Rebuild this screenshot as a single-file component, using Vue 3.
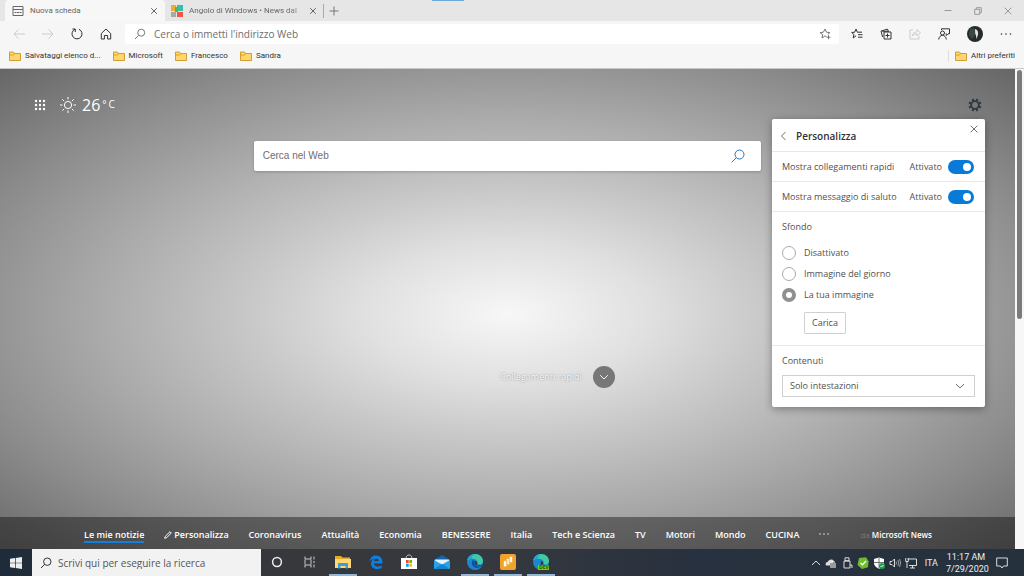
<script setup>
import { ref } from 'vue'

const favorites = ['Salvataggi elenco d...', 'Microsoft', 'Francesco', 'Sandra']
const topics = ['Coronavirus', 'Attualità', 'Economia', 'BENESSERE', 'Italia', 'Tech e Scienza', 'TV', 'Motori', 'Mondo', 'CUCINA']
const quickLinks = ref(true)
const greeting = ref(true)
const background = ref('custom')
const backgrounds = [
  { id: 'off', label: 'Disattivato' },
  { id: 'daily', label: 'Immagine del giorno' },
  { id: 'custom', label: 'La tua immagine' },
]
</script>

<template>
  <div class="desktop">
    <header class="tabs">
      <div class="tab active">
        <svg class="i12" viewBox="0 0 12 12"><path d="M1 1.500h10v9H1zM1 4.500h10M2.500 7.500h2M5 7.500h2M7.500 7.500h2" /></svg>
        <span class="tab-title">Nuova scheda</span>
        <button class="bare" aria-label="Chiudi scheda"><svg class="i8" viewBox="0 0 8 8"><path d="M1.200 1.200l5.600 5.600M6.800 1.200L1.200 6.800" /></svg></button>
      </div>
      <div class="tab second">
        <svg class="i12 solid" viewBox="0 0 12 12"><path fill="#f0ad2d" d="M0 0h5v6H0z" /><path fill="#35bfa8" d="M6 0h6v6H6z" /><path fill="#a8a8a8" d="M0 7h5v5H0z" /><path fill="#f25745" d="M6 7h6v5H6z" /><path fill="#5db447" d="M4 2h3v5H4z" /></svg>
        <span class="tab-title faded">Angolo di Windows • News dal</span>
        <button class="bare" aria-label="Chiudi scheda"><svg class="i8" viewBox="0 0 8 8"><path d="M1.200 1.200l5.600 5.600M6.800 1.200L1.200 6.800" /></svg></button>
      </div>
      <button class="bare new-tab" aria-label="Nuova scheda"><svg class="i10" viewBox="0 0 10 10"><path d="M5 .5v9M.5 5h9" /></svg></button>
      <i class="accent"></i>
      <div class="window-controls">
        <button class="bare" aria-label="Riduci"><svg class="i8" viewBox="0 0 8 8"><path d="M.5 3.500h7" /></svg></button>
        <button class="bare" aria-label="Ripristina"><svg class="i8" viewBox="0 0 8 8"><path d="M.7 2.300h5v5h-5zM2.300 2V.7h5v5H6" /></svg></button>
        <button class="bare" aria-label="Chiudi"><svg class="i8" viewBox="0 0 8 8"><path d="M.7.7l6.600 6.600M7.300.7L.7 7.300" /></svg></button>
      </div>
    </header>

    <nav class="toolbar">
      <div class="nav-buttons">
        <button class="bare off" aria-label="Indietro"><svg class="i14" viewBox="0 0 14 14"><path d="M13 7H2M6.500 2.500L2 7l4.500 4.500" /></svg></button>
        <button class="bare off" aria-label="Avanti"><svg class="i14" viewBox="0 0 14 14"><path d="M1 7h11M7.500 2.500L12 7l-4.500 4.500" /></svg></button>
        <button class="bare" aria-label="Aggiorna"><svg class="i14 dark" viewBox="0 0 14 14"><path d="M9 2.300A5 5 0 1 1 5 2.300M5.300 5V2H2.400" /></svg></button>
        <button class="bare" aria-label="Pagina iniziale"><svg class="i14 dark" viewBox="0 0 14 14"><path d="M2.300 6.500L7 2l4.700 4.500V12H8.600V8.500H5.400V12H2.300z" /></svg></button>
      </div>
      <label class="address">
        <svg class="i12" viewBox="0 0 12 12"><circle cx="7.200" cy="4.700" r="3.500" /><path d="M4.700 7.300L1 11" /></svg>
        <input type="text" aria-label="Indirizzo" placeholder="Cerca o immetti l'indirizzo Web" />
        <button class="bare" aria-label="Aggiungi ai preferiti"><svg class="i12" viewBox="0 0 12 12"><path d="M7.500 8.600L6 7.900 3 10l.7-3.400L1 4.600l3.400-.4L6 1l1.500 3.200 3.400.4-2 1.900M7.500 9.200h4M9.500 7.200v4" /></svg></button>
      </label>
      <div class="tools">
        <button class="bare" aria-label="Preferiti"><svg class="i12 dark" viewBox="0 0 12 12"><path d="M5 7.800L2.200 10l.7-3.500L.7 4.500l3-.3L5 1l1.300 3.200H11M7 6.700h4.500M7 9.200h4.500" /></svg></button>
        <button class="bare" aria-label="Raccolte"><svg class="i12 dark" viewBox="0 0 12 12"><path d="M4 4h7v7H4zM7.500 5.500v4M5.500 7.500h4M2.600 9L1 3l6.600-1.800.6 2M2.300 3.300H9" /></svg></button>
        <button class="bare off" aria-label="Condividi"><svg class="i12" viewBox="0 0 12 12"><path d="M4 2H1v9h9V8M3.500 8c.2-3 2-4 4.500-4V1.500L11.500 5 8 8V6C6 6 4.500 6.500 3.500 8z" /></svg></button>
        <button class="bare" aria-label="Feedback"><svg class="i12 dark" viewBox="0 0 12 12"><circle cx="4.500" cy="5" r="2" /><path d="M.7 11.500c.4-5.500 7.200-5.500 7.600 0M3.500 2V.8h8v5H10L8.300 7.500V5.800H7.700" /></svg></button>
        <button class="bare" aria-label="Profilo"><svg class="i16 solid" viewBox="0 0 16 16"><circle cx="8" cy="8" r="8" fill="#242b30" /><path fill="#58614f" d="M3 3l4-1 2 6-4 5-3-4z" opacity=".5" /><path fill="#e9e4d9" d="M8 3c4 1 4 6 1 10 .6-3-.2-4-.8-5.500z" /></svg></button>
        <button class="bare" aria-label="Altro"><svg class="i12 solid dark" viewBox="0 0 12 12"><circle cx="1.500" cy="6" r=".8" /><circle cx="6" cy="6" r=".8" /><circle cx="10.500" cy="6" r=".8" /></svg></button>
      </div>
    </nav>

    <nav class="favorites">
      <a v-for="name in favorites" :key="name" href="#">
        <svg class="i12 solid" viewBox="0 0 12 12"><path fill="#ffd66b" stroke="#c98b16" stroke-width=".8" d="M.5 2h4l1.200 1.500h5.800V10.500H.5z" /><path fill="none" stroke="#c98b16" stroke-width=".7" d="M.5 5h4l1.200-1.500" /></svg>{{ name }}
      </a>
      <a class="others" href="#">
        <svg class="i12 solid" viewBox="0 0 12 12"><path fill="#ffd66b" stroke="#c98b16" stroke-width=".8" d="M.5 2h4l1.200 1.500h5.800V10.500H.5z" /><path fill="none" stroke="#c98b16" stroke-width=".7" d="M.5 5h4l1.200-1.500" /></svg>Altri preferiti
      </a>
    </nav>

    <div class="viewport">
      <main class="page">
        <div class="top">
          <button class="bare" aria-label="App"><svg class="i12 solid" viewBox="0 0 12 12"><template v-for="y in 3" :key="y"><circle v-for="x in 3" :key="x" :cx="x * 4 - 2" :cy="y * 4 - 2" r="1.200" /></template></svg></button>
          <svg class="i16 sun" viewBox="0 0 16 16"><circle cx="8" cy="8" r="3.600" /><path d="M8 0v2.500M8 13.500V16M0 8h2.500M13.500 8H16M2.300 2.300l1.800 1.800M11.900 11.900l1.800 1.800M2.300 13.700l1.800-1.800M11.900 4.100l1.800-1.800" /></svg>
          <span class="temp">26<sup><span>°</span><span>C</span></sup></span>
          <button class="bare gear" aria-label="Impostazioni pagina"><svg class="i14" viewBox="0 0 14 14"><circle cx="7" cy="7" r="3.800" stroke-width="1.800" /><path stroke-width="2.200" d="M8.500 3.300l.9-2.300M10.700 5.500l2.300-.9M10.700 8.500l2.300.9M8.500 10.700l.9 2.300M5.500 10.700L4.600 13M3.300 8.500L1 9.400M3.300 5.500L1 4.600M5.500 3.300L4.600 1" /></svg></button>
        </div>
        <form class="web-search" @submit.prevent>
          <input type="text" aria-label="Cerca nel Web" placeholder="Cerca nel Web" />
          <button class="bare" aria-label="Cerca"><svg class="i14" viewBox="0 0 14 14"><circle cx="8.500" cy="5.500" r="4.500" /><path d="M5.300 8.700L.7 13.300" /></svg></button>
        </form>
        <div class="quick">
          <span>Collegamenti rapidi</span>
          <button class="bare" aria-label="Mostra collegamenti"><svg class="i10" viewBox="0 0 10 10"><path d="M1.200 3.200L5 7l3.800-3.800" /></svg></button>
        </div>
        <nav class="news">
          <a href="#" class="current">Le mie notizie</a>
          <a href="#" class="edit"><svg class="i8" viewBox="0 0 8 8"><path d="M.7 7.300l.6-2L6 .7 7.300 2 2.700 6.700z" /></svg>Personalizza</a>
          <a v-for="topic in topics" :key="topic" href="#">{{ topic }}</a>
          <button class="bare" aria-label="Altre notizie"><svg class="i10 solid" viewBox="0 0 10 10"><circle cx="1" cy="4" r=".7" /><circle cx="5" cy="4" r=".7" /><circle cx="9" cy="4" r=".7" /></svg></button>
          <span class="source"><small>da</small> Microsoft News</span>
        </nav>

        <section class="panel">
          <header>
            <button class="bare" aria-label="Indietro"><svg class="i10" viewBox="0 0 10 10"><path d="M6.500 1l-4 4 4 4" /></svg></button>
            <h2>Personalizza</h2>
            <button class="bare close" aria-label="Chiudi"><svg class="i8" viewBox="0 0 8 8"><path d="M.7.7l6.600 6.600M7.300.7L.7 7.300" /></svg></button>
          </header>
          <label class="switch-row">Mostra collegamenti rapidi<span>Attivato</span><input v-model="quickLinks" type="checkbox" role="switch" /></label>
          <label class="switch-row">Mostra messaggio di saluto<span>Attivato</span><input v-model="greeting" type="checkbox" role="switch" /></label>
          <fieldset>
            <legend>Sfondo</legend>
            <label v-for="item in backgrounds" :key="item.id"><input v-model="background" type="radio" name="background" :value="item.id" />{{ item.label }}</label>
            <button class="upload">Carica</button>
          </fieldset>
          <div class="contents">
            <label for="content-mode">Contenuti</label>
            <div class="select-box">
              <select id="content-mode"><option>Solo intestazioni</option></select>
              <svg class="i10" viewBox="0 0 10 10"><path d="M1 3l4 4 4-4" /></svg>
            </div>
          </div>
        </section>
      </main>
      <div class="scrollbar"><i></i></div>
    </div>

    <footer class="taskbar">
      <button class="bare start" aria-label="Start"><svg class="i12 solid" viewBox="0 0 12 12"><path d="M0 1.700l5-.7v4.700H0zM5.700.9L12 0v5.700H5.700zM0 6.300h5V11l-5-.7zM5.700 6.300H12V12l-6.300-.9z" /></svg></button>
      <label class="task-search">
        <svg class="i12" viewBox="0 0 12 12"><circle cx="7.300" cy="4.700" r="3.700" /><path d="M4.700 7.300L1 11" /></svg>
        <input type="text" aria-label="Ricerca" placeholder="Scrivi qui per eseguire la ricerca" />
      </label>
      <div class="apps">
        <button class="bare" aria-label="Cortana"><svg class="i12" viewBox="0 0 12 12"><circle cx="6" cy="6" r="4.400" stroke-width="1.500" /></svg></button>
        <button class="bare" aria-label="Visualizzazione attività"><svg class="i12 thin" viewBox="0 0 12 12"><path d="M1 .5V3h6V.5M1 11.500V9h6v2.500M1 3.500v5M7 3.500v5M10 .5v3M10 5v2M10 8.500v3" /></svg></button>
        <button class="bare open" aria-label="Esplora file"><svg class="i16 solid" viewBox="0 0 16 16"><path fill="#e8a92b" d="M0 2h6l1.500 1.500H15V14H0z" /><path fill="#ffd875" d="M0 5h16v9H0z" /><path fill="#3f9bdc" d="M3 9h10v5.500h-2.500V12h-5v2.500H3z" /></svg></button>
        <button class="bare" aria-label="Edge classico"><svg class="i14 solid" viewBox="0 0 14 14"><path fill="#0a7fde" d="M.5 6.300C1.200 2.400 3.700.5 7.200.5c4 0 6.300 2.900 6.300 6.900v1.100H5c.2 3.400 4.700 3.700 7.700 1.900v2.500C8.700 15.100 2 14 2 8.700c0-2.500 1.600-4.200 3.500-5C3 4 1.500 5.200.5 6.300zM5 6h4.700C9.700 3 5.200 3.200 5 6z" /></svg></button>
        <button class="bare" aria-label="Store"><svg class="i16 solid" viewBox="0 0 16 16"><path fill="none" stroke="#bbb" d="M5 4.500C5-.3 11-.3 11 4.500" /><path fill="#fff" d="M0 4h16v11H0z" /><path fill="#ef5028" d="M5 6h2.700v3H5z" /><path fill="#7db700" d="M8.300 6H11v3H8.300z" /><path fill="#00a3ee" d="M5 9.700h2.700v3H5z" /><path fill="#fdb813" d="M8.300 9.700H11v3H8.300z" /></svg></button>
        <button class="bare" aria-label="Posta"><svg class="i16 solid" viewBox="0 0 16 16"><path fill="#1265ad" d="M0 6l8-5 8 5v9H0z" /><path fill="#e4f4ff" d="M1 5.500h14v2L8 12 1 7.500z" /><path fill="#27a3e8" d="M0 6l8 4.500L16 6v9H0z" /><path fill="#1685cf" d="M0 15l8-5 8 5z" /></svg></button>
        <button class="bare open" aria-label="Edge"><svg class="i16 solid" viewBox="0 0 16 16"><circle cx="8" cy="8" r="8" fill="#1c86d2" /><path fill="#41c9a3" d="M.3 6.500C1.200 2.500 4.300 0 8 0c5 0 8 3.400 8 7.200 0 3-3.500 4-6 3 1.300-2 .2-4.600-2.700-5.200C4.200 4.300 1.500 5 .3 6.500z" /><path fill="#23a4d8" d="M.3 6.500C1.200 2.500 4.300 0 8 0 6 1 4.500 3 4.600 4.700 2.800 4.800 1.200 5.400.3 6.500z" /><path fill="#0c519f" d="M5.800 6.200C3 9.500 6.500 15 11.500 13.800c1.300-.3 2.300-1 3-1.800-3.300 1.500-9-.2-6.500-5.200-.6-.5-1.500-.7-2.200-.6z" /><path fill="#333b42" d="M8 7c-1.300 3.800 2 5.500 6.500 4.800l1-1.300c-1.900.8-4 .9-5.500-.3.900-1.400.2-3-2-3.200z" /></svg></button>
        <button class="bare open" aria-label="Presentazione"><svg class="i16 solid" viewBox="0 0 16 16"><rect width="16" height="16" rx="2" fill="#efa22d" /><path fill="#fff" stroke="#efa22d" stroke-width=".6" d="M3.500 7l3.500-.7v6l-3.500.7zM6.300 5l3.500-.7v6l-3.500.7zM9 3l3.500-.7v6L9 9z" /></svg></button>
        <button class="bare open" aria-label="Edge Dev"><svg class="i16 solid" viewBox="0 0 16 16"><circle cx="8" cy="8" r="8" fill="#1c86d2" /><path fill="#41c9a3" d="M.3 6.500C1.200 2.500 4.300 0 8 0c5 0 8 3.400 8 7.200 0 3-3.500 4-6 3 1.300-2 .2-4.600-2.700-5.200C4.200 4.300 1.500 5 .3 6.500z" /><path fill="#23a4d8" d="M.3 6.500C1.200 2.500 4.300 0 8 0 6 1 4.500 3 4.600 4.700 2.800 4.800 1.200 5.400.3 6.500z" /><path fill="#333b42" d="M8 7c-1.300 3.800 2 5.500 6.500 4.800l1-1.300c-1.900.8-4 .9-5.500-.3.900-1.400.2-3-2-3.200z" /><path fill="#73cf12" d="M5 11h11v5H5z" /><text x="6" y="15.400" font-size="5" font-weight="700" fill="#28520b">DEV</text></svg></button>
      </div>
      <div class="tray">
        <svg class="i10" viewBox="0 0 10 10"><path d="M1 7l4-4 4 4" /></svg>
        <svg class="i12 solid" viewBox="0 0 12 12"><path fill="#ddd" d="M1 8.500C0 6 1.500 5 2.700 5 3.500 2 8 1.300 9.200 4.500L6 8.500z" /><path fill="#999" d="M5 6h6v5H5z" /><path fill="none" stroke="#eee" stroke-width=".8" d="M6.300 6V4.500h3V6" /></svg>
        <svg class="i12" viewBox="0 0 12 12"><path d="M4 .8h4v3H4zM3 4h6v7H3zM9 8h2v3" /></svg>
        <svg class="i12 solid" viewBox="0 0 12 12"><path fill="#70bd2b" d="M2 1l7-.7 2.500 4-.5 6L5 12 .5 8z" /><path fill="none" stroke="#fff" stroke-width="1.300" d="M3.500 6l2 1.800L9 4" /></svg>
        <svg class="i12 solid" viewBox="0 0 12 12"><path fill="#fff" d="M1 2l5-1.500L11 2v4c0 3-3 5-5 5.700C3.500 10.500 1 9 1 6z" /><path fill="none" stroke="#46505b" stroke-width=".8" d="M6 1v10M1 5.500h10" /><circle cx="9" cy="9" r="3" fill="#1ba34d" /><path fill="none" stroke="#fff" d="M7.500 9l1 1 2-2" /></svg>
        <svg class="i12" viewBox="0 0 12 12"><path d="M1 4.500h2L5.500 2v8L3 7.500H1z" /><path opacity=".65" d="M7 4.500q1 1.500 0 3M8.800 3q2 3 0 6M10.600 2q2 4 0 8" /></svg>
        <svg class="i12" viewBox="0 0 12 12"><path d="M2.500 2h9v6.500H4M7.500 8.500V11M5 11h5M.7 1v3.500h2.600V1M2 4.500V11" /></svg>
        <span class="lang">ITA</span>
        <time>11:17 AM<br />7/29/2020</time>
        <svg class="i12 note" viewBox="0 0 12 12"><path d="M.7 1h10.600v8H7.500L6 11 4.500 9H.7z" /></svg>
      </div>
    </footer>
  </div>
</template>

<style>
body { margin: 0; }
</style>

<style scoped>
.desktop {
  display: flex;
  flex-direction: column;
  min-height: 100vh;
  overflow: hidden;
  background: #f6f6f6;
  color: #444;
  font-family: "Open Sans", "Noto Sans", sans-serif;
  font-size: 9px;
  line-height: 12px;
}
* { box-sizing: border-box; }
a { color: inherit; text-decoration: none; }
button, input, select { font: inherit; color: inherit; }
input { min-width: 0; border: 0; outline: 0; background: none; padding: 0; }
input::placeholder { color: #6e6e6e; opacity: 1; }
.bare { display: flex; align-items: center; justify-content: center; padding: 0; border: 0; background: none; }
svg { display: block; flex: none; overflow: visible; fill: none; stroke: currentColor; }
svg.solid { fill: currentColor; stroke: none; }
.i8 { width: 8px; height: 8px; }
.i10 { width: 10px; height: 10px; }
.i12 { width: 12px; height: 12px; }
.i14 { width: 14px; height: 14px; }
.i16 { width: 16px; height: 16px; }
.dark { color: #333; }
.off { color: #ccc; }
.tabs, .favorites { font-family: Roboto, "Noto Sans", sans-serif; font-size: 8px; }
.lang, time { font-family: Roboto, "Noto Sans", sans-serif; }

.tabs { display: flex; position: relative; height: 21px; background: #e6e6e6; color: #666; }
.tab { display: flex; align-items: center; gap: 6px; width: 160px; padding: 0 7px; }
.active { margin-left: 5px; background: #f7f7f7; border-radius: 4px 4px 0 0; }
.second { width: 158px; padding: 0 6px; }
.tab-title { flex: 1; white-space: nowrap; }
.faded { mask-image: linear-gradient(90deg, #000 85%, #0008); }
.new-tab { align-self: center; height: 14px; padding-left: 5px; border-left: 1px solid #aaa; color: #777; }
.accent { position: absolute; left: calc(50% - 80px); top: 0; width: 32px; height: 1px; background: #6aa8d6; }
.window-controls { display: flex; gap: 22px; margin: 0 12px 0 auto; color: #999; }

.toolbar { display: flex; align-items: center; height: 26px; }
.nav-buttons { display: flex; gap: 15px; margin: 0 12px; }
.address { display: flex; flex: 1; align-items: center; gap: 8px; height: 20px; padding: 0 8px 0 9px; border-radius: 3px; background: #fff; color: #777; font-size: 10px; }
.address input { flex: 1; }
.tools { display: flex; align-items: center; gap: 17px; margin: 0 12px; }

.favorites { display: flex; align-items: center; gap: 12px; height: 22px; padding: 0 9px 4px; color: #333; border-bottom: 1px solid #c8c8c8; }
.favorites a { display: flex; align-items: center; gap: 4px; }
.favorites .others { margin-left: auto; padding-left: 6px; border-left: 1px solid #ddd; }

.viewport { display: flex; flex: 1; }
.page {
  position: relative;
  display: flex;
  flex: 1;
  flex-direction: column;
  align-items: center;
  min-width: 0;
  background: radial-gradient(ellipse farthest-corner at 50% 51%, #f7f7f7 0%, #e0e0e0 20%, #c8c8c8 36%, #aaa 57%, #8c8c8c 77%, #666 100%);
}
.top { display: flex; align-items: center; align-self: stretch; height: 72px; padding: 0 33px 0 34px; color: #fff; }
.sun { margin: 0 6px 0 14px; }
.temp { display: flex; font-size: 16px; line-height: 20px; }
sup { display: flex; gap: 2px; margin-left: 2px; font-size: 10px; line-height: 18px; }
.gear { margin-left: auto; color: #303a47; }
.web-search { display: flex; align-items: center; width: 50%; height: 30px; padding: 0 16px 0 9px; border-radius: 2px; background: #fff; box-shadow: 0 1px 3px #0003; font: 10px/14px "Liberation Sans", sans-serif; }
.web-search input { flex: 1; }
.web-search button { color: #1a79c9; }
.quick { display: flex; align-items: center; gap: 11px; margin: auto 0 129px 100px; color: #f4f4f4; text-shadow: 0 0 2px #888; }
.quick button { width: 22px; height: 22px; border-radius: 50%; background: #777; }
.news { display: flex; align-items: center; align-self: stretch; gap: 20px; height: 32px; padding: 3px 72px 0 84px; background: #0006; color: #fff; font-weight: 600; white-space: nowrap; }
.current { border-bottom: 2px solid #1080dc; margin-top: 2px; }
.edit { display: flex; align-items: center; gap: 2px; }
.source { margin: 0 auto; font-size: 8px; }
.source small { color: #777; font-size: 8px; font-weight: 400; }

.panel { position: absolute; right: 30px; top: 50px; width: 213px; border-radius: 2px; background: #fff; box-shadow: 0 2px 8px #0005; color: #505050; }
.panel svg { color: #707070; }
.panel header { display: flex; align-items: center; gap: 7px; height: 32px; padding: 2px 7px 0; }
h2 { margin: 0; color: #333; font-size: 10px; font-weight: 600; }
.close { align-self: flex-start; margin: 4px 0 0 auto; }
.switch-row { display: flex; align-items: center; height: 30px; padding: 0 11px 0 10px; border-top: 1px solid #e8e8e8; }
.switch-row span { margin: 0 6px 0 auto; }
.switch-row input { appearance: none; display: flex; width: 26px; height: 14px; margin: 0; padding: 3px; border-radius: 7px; background: #087bd8; }
.switch-row input::after { content: ""; width: 8px; height: 8px; border-radius: 50%; background: #fff; }
.switch-row input:checked { justify-content: flex-end; }
fieldset { display: flex; flex-direction: column; align-items: flex-start; gap: 7px; margin: 0; padding: 9px 10px 11px; border: 0; border-top: 1px solid #e8e8e8; }
legend { float: left; margin-bottom: 6px; padding: 0; }
fieldset label { display: flex; align-items: center; gap: 8px; height: 14px; }
fieldset input { appearance: none; width: 14px; height: 14px; margin: 0; border: 1px solid #aaa; border-radius: 50%; }
fieldset input:checked { border: 4px solid #909090; }
.upload { height: 22px; margin: 3px 0 0 22px; padding: 0 7px; border: 1px solid #d0d0d0; border-radius: 1px; background: #fff; }
.contents { display: flex; flex-direction: column; gap: 8px; padding: 9px 10px 10px; border-top: 1px solid #e8e8e8; }
.select-box { display: grid; align-items: center; border: 1px solid #d0d0d0; }
.select-box > * { grid-area: 1 / 1; }
.select-box svg { justify-self: end; margin-right: 9px; pointer-events: none; }
select { appearance: none; height: 20px; padding: 0 7px; border: 0; background: #fff; }
.scrollbar { flex: none; width: 9px; padding: 1px 2px; background: #f7f7f7; }
.scrollbar i { display: block; width: 5px; height: 52%; border-radius: 3px; background: #7b7b7b; }

.taskbar { display: flex; height: 27px; background: linear-gradient(90deg, #1e2b3a, #37383c 28%, #35383e 48%, #28313f 68%, #26313e); color: #eee; }
.start { width: 32px; }
.task-search { display: flex; align-items: center; gap: 6px; width: 229px; padding: 0 8px; background: #f2f2f2; color: #333; font-size: 10px; }
.task-search input { flex: 1; }
.task-search input::placeholder { color: #555; }
.apps { display: flex; gap: 5px; margin-left: 2px; }
.apps button { width: 28px; border-bottom: 2px solid transparent; }
.apps .open { border-color: #8fb8da; }
.thin { opacity: .8; }
.tray { display: flex; align-items: center; gap: 4px; margin: 0 16px 0 auto; }
.tray svg { stroke-width: .9; }
.lang { margin: 0 4px; }
time { width: 40px; text-align: center; white-space: nowrap; }
.note { margin-left: 6px; }
</style>
